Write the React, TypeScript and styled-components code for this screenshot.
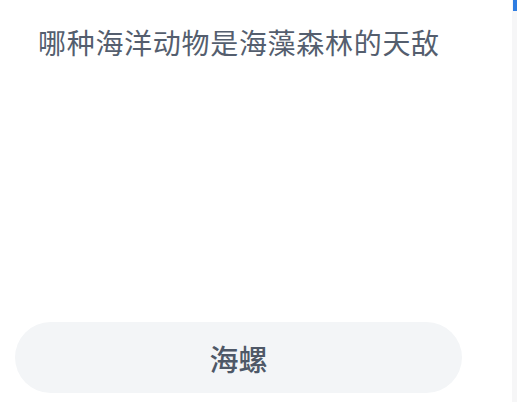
import React from "react";
import styled, { createGlobalStyle } from "styled-components";

const Global = createGlobalStyle`
  html, body { margin: 0; padding: 0; background: #ffffff; }
  body { font-family: "Noto Sans CJK SC", "Noto Sans", sans-serif; }
`;

const Page = styled.div`
  display: flex;
  width: 517px;
  height: 402px;
  overflow: hidden;
`;

const Main = styled.div`
  flex: 1;
  display: flex;
  flex-direction: column;
  justify-content: space-between;
  padding: 21px 0 9px 0;
  box-sizing: border-box;
`;

const Question = styled.h1`
  margin: 0 0 0 38px;
  font-size: 28px;
  line-height: 42px;
  font-weight: 400;
  color: #545e6e;
  letter-spacing: 0.7px;
`;

const Option = styled.button`
  margin-left: 15px;
  width: 447px;
  height: 71px;
  border: none;
  border-radius: 36px;
  background: #f3f5f7;
  font-family: inherit;
  font-size: 29px;
  font-weight: 500;
  color: #4e5867;
  display: flex;
  align-items: center;
  justify-content: center;
  padding: 0;
`;

const Scrollbar = styled.div`
  width: 5px;
  background: #f6f6f7;
  display: flex;
  flex-direction: column;
`;

const Thumb = styled.div`
  height: 11px;
  margin-left: 1px;
  background: #2f7de1;
`;

export default function App() {
  return (
    <Page>
      <Global />
      <Main>
        <Question>哪种海洋动物是海藻森林的天敌</Question>
        <Option>海螺</Option>
      </Main>
      <Scrollbar>
        <Thumb />
      </Scrollbar>
    </Page>
  );
}
